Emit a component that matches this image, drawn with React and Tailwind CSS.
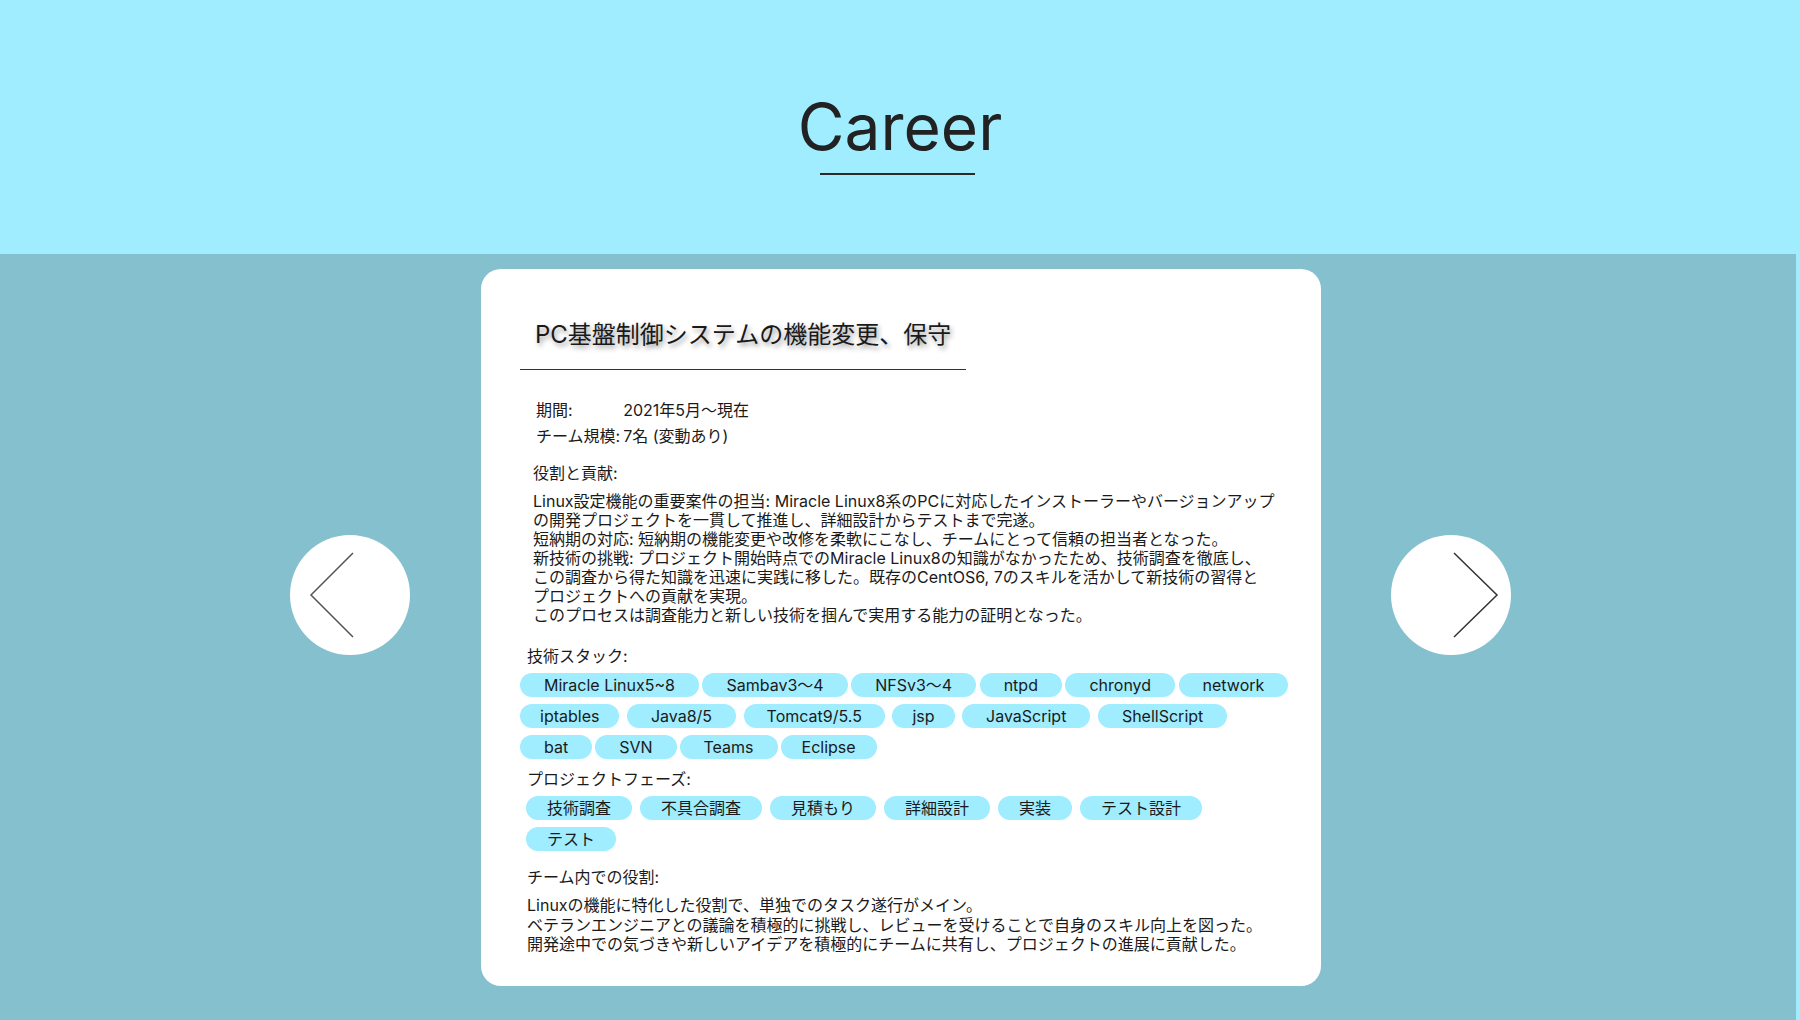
import React from "react";

const techRows = [
  { gap: "gap-x-[3.5px]", items: [["Miracle Linux5~8"], ["Sambav3〜4"], ["NFSv3〜4"], ["ntpd"], ["chronyd"], ["network"]] },
  { gap: "gap-x-[7.5px]", items: [["iptables", "px-[20px]"], ["Java8/5"], ["Tomcat9/5.5", "px-[23px]"], ["jsp", "px-[20px]"], ["JavaScript"], ["ShellScript"]] },
  { gap: "gap-x-[3px]", items: [["bat"], ["SVN"], ["Teams"], ["Eclipse", "px-[21px]"]] },
];

const phaseRows = [
  ["技術調査", "不具合調査", "見積もり", "詳細設計", "実装", "テスト設計"],
  ["テスト"],
];

const roleLines = [
  "Linux設定機能の重要案件の担当: Miracle Linux8系のPCに対応したインストーラーやバージョンアップ",
  "の開発プロジェクトを一貫して推進し、詳細設計からテストまで完遂。",
  "短納期の対応: 短納期の機能変更や改修を柔軟にこなし、チームにとって信頼の担当者となった。",
  "新技術の挑戦: プロジェクト開始時点でのMiracle Linux8の知識がなかったため、技術調査を徹底し、",
  "この調査から得た知識を迅速に実践に移した。既存のCentOS6, 7のスキルを活かして新技術の習得と",
  "プロジェクトへの貢献を実現。",
  "このプロセスは調査能力と新しい技術を掴んで実用する能力の証明となった。",
];

const teamLines = [
  "Linuxの機能に特化した役割で、単独でのタスク遂行がメイン。",
  "ベテランエンジニアとの議論を積極的に挑戦し、レビューを受けることで自身のスキル向上を図った。",
  "開発途中での気づきや新しいアイデアを積極的にチームに共有し、プロジェクトの進展に貢献した。",
];

function Tag({ children, pad }) {
  return (
    <span className={`h-[24.5px] ${pad} rounded-full bg-[#9FEDFE] flex items-center text-[16px] leading-none whitespace-nowrap text-[#1a1a1a]`}>
      {children}
    </span>
  );
}

function ArrowButton({ dir }) {
  return (
    <button className="w-[120px] h-[120px] shrink-0 rounded-full bg-white flex items-center justify-center mt-[266px]">
      <svg width="120" height="120" viewBox="0 0 120 120" fill="none">
        {dir === "left" ? (
          <polyline points="63,18 21,60 63,102" stroke="#555" strokeWidth="1.5" fill="none" />
        ) : (
          <polyline points="63,18 106,60 63,102" stroke="#333" strokeWidth="1.5" fill="none" />
        )}
      </svg>
    </button>
  );
}

export default function App() {
  return (
    <div className="w-[1800px] min-h-[1020px] bg-[#9FEDFE] font-[Inter,'Noto_Sans_CJK_JP',sans-serif] text-[#1a1a1a]">
      <header className="h-[254px] flex flex-col items-center pt-[95px]">
        <h1 className="text-[64px] leading-[64px] font-normal text-[#222]">Career</h1>
        <div className="mt-[14px] w-[155px] h-[1.5px] bg-[#2a2a2a] -translate-x-[3px]"></div>
      </header>

      <section className="w-[1796px] min-h-[766px] bg-[#85C0CE] flex justify-center items-start pt-[15px] pb-[36px] pl-[5px]">
        <ArrowButton dir="left" />
        <div className="w-[840px] ml-[71px] mr-[70px] bg-white rounded-[20px] pl-[39px] pr-[40px] pt-[50px] pb-[31px]">
          <div>
            <h2 className="inline-block px-[15px] pb-[18px] border-b border-[#333] text-[24px] leading-[32px] font-normal text-[#1a1a1a] [text-shadow:2px_3px_5px_rgba(0,0,0,0.4)]">
              PC基盤制御システムの機能変更、保守
            </h2>
          </div>

          <div className="ml-[16px] mt-[27px] grid grid-cols-[auto_auto] justify-start gap-x-[3px] text-[16px] leading-[26px]">
            <div>期間:</div>
            <div>2021年5月〜現在</div>
            <div>チーム規模:</div>
            <div>7名 (変動あり)</div>
          </div>

          <div className="ml-[13px] mt-[15px] text-[16px] leading-[19px]">役割と貢献:</div>
          <div className="ml-[13px] mt-[8.5px] text-[16px] leading-[19px] whitespace-nowrap">
            {roleLines.map((l, i) => (
              <div key={i}>{l}</div>
            ))}
          </div>

          <div className="ml-[7px] mt-[22.5px] text-[16px] leading-[19px]">技術スタック:</div>
          <div className="mt-[6.5px] flex flex-col gap-y-[6.5px]">
            {techRows.map((row, i) => (
              <div key={i} className={`flex ${row.gap}`}>
                {row.items.map(([t, p]) => (
                  <Tag key={t} pad={p || "px-[24px]"}>{t}</Tag>
                ))}
              </div>
            ))}
          </div>

          <div className="ml-[7px] mt-[10.5px] text-[16px] leading-[19px]">プロジェクトフェーズ:</div>
          <div className="ml-[6px] mt-[7px] flex flex-col gap-y-[6.5px]">
            {phaseRows.map((row, i) => (
              <div key={i} className="flex gap-x-[8px]">
                {row.map((t) => (
                  <Tag key={t} pad="px-[21px]">{t}</Tag>
                ))}
              </div>
            ))}
          </div>

          <div className="ml-[7px] mt-[17px] text-[16px] leading-[19px]">チーム内での役割:</div>
          <div className="ml-[7px] mt-[9px] text-[16px] leading-[19.5px] whitespace-nowrap">
            {teamLines.map((l, i) => (
              <div key={i}>{l}</div>
            ))}
          </div>
        </div>
        <ArrowButton dir="right" />
      </section>
    </div>
  );
}
